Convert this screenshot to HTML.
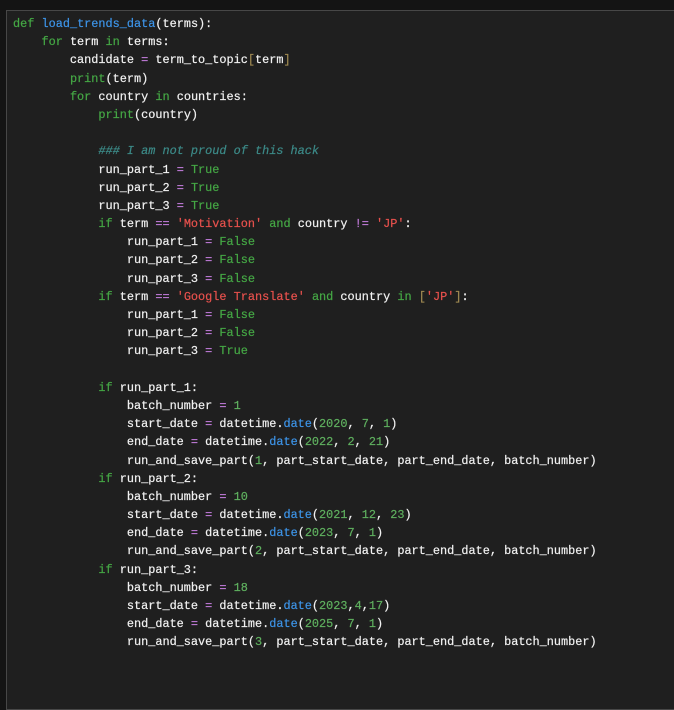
<!DOCTYPE html>
<html><head><style>
html,body{margin:0;padding:0;background:#141414;width:674px;height:673px;overflow:hidden}
.p{position:absolute;left:6px;top:10px;width:700px;height:700px;background:#1f1f1f;border:1px solid #474747;box-sizing:border-box}
pre{position:absolute;left:13px;top:15px;margin:0;font-family:"Liberation Mono",monospace;font-size:11.87px;line-height:18.18px;color:#f2f2f2;white-space:pre;-webkit-text-stroke:0.2px currentColor}
.k{color:#45a845}.f{color:#3d94e8}.s{color:#e8514d}.o{color:#c07ad8}.c{color:#3c8a88;font-style:italic}.b{color:#a08a52}.n{color:#5fb05f}
</style></head><body><div class="p"></div><pre><span class="k">def</span> <span class="f">load_trends_data</span>(terms):
    <span class="k">for</span> term <span class="k">in</span> terms:
        candidate <span class="o">=</span> term_to_topic<span class="b">[</span>term<span class="b">]</span>
        <span class="k">print</span>(term)
        <span class="k">for</span> country <span class="k">in</span> countries:
            <span class="k">print</span>(country)

            <span class="c">### I am not proud of this hack</span>
            run_part_1 <span class="o">=</span> <span class="k">True</span>
            run_part_2 <span class="o">=</span> <span class="k">True</span>
            run_part_3 <span class="o">=</span> <span class="k">True</span>
            <span class="k">if</span> term <span class="o">==</span> <span class="s">'Motivation'</span> <span class="k">and</span> country <span class="o">!=</span> <span class="s">'JP'</span>:
                run_part_1 <span class="o">=</span> <span class="k">False</span>
                run_part_2 <span class="o">=</span> <span class="k">False</span>
                run_part_3 <span class="o">=</span> <span class="k">False</span>
            <span class="k">if</span> term <span class="o">==</span> <span class="s">'Google Translate'</span> <span class="k">and</span> country <span class="k">in</span> <span class="b">[</span><span class="s">'JP'</span><span class="b">]</span>:
                run_part_1 <span class="o">=</span> <span class="k">False</span>
                run_part_2 <span class="o">=</span> <span class="k">False</span>
                run_part_3 <span class="o">=</span> <span class="k">True</span>

            <span class="k">if</span> run_part_1:
                batch_number <span class="o">=</span> <span class="n">1</span>
                start_date <span class="o">=</span> datetime.<span class="f">date</span>(<span class="n">2020</span>, <span class="n">7</span>, <span class="n">1</span>)
                end_date <span class="o">=</span> datetime.<span class="f">date</span>(<span class="n">2022</span>, <span class="n">2</span>, <span class="n">21</span>)
                run_and_save_part(<span class="n">1</span>, part_start_date, part_end_date, batch_number)
            <span class="k">if</span> run_part_2:
                batch_number <span class="o">=</span> <span class="n">10</span>
                start_date <span class="o">=</span> datetime.<span class="f">date</span>(<span class="n">2021</span>, <span class="n">12</span>, <span class="n">23</span>)
                end_date <span class="o">=</span> datetime.<span class="f">date</span>(<span class="n">2023</span>, <span class="n">7</span>, <span class="n">1</span>)
                run_and_save_part(<span class="n">2</span>, part_start_date, part_end_date, batch_number)
            <span class="k">if</span> run_part_3:
                batch_number <span class="o">=</span> <span class="n">18</span>
                start_date <span class="o">=</span> datetime.<span class="f">date</span>(<span class="n">2023</span>,<span class="n">4</span>,<span class="n">17</span>)
                end_date <span class="o">=</span> datetime.<span class="f">date</span>(<span class="n">2025</span>, <span class="n">7</span>, <span class="n">1</span>)
                run_and_save_part(<span class="n">3</span>, part_start_date, part_end_date, batch_number)</pre></body></html>
